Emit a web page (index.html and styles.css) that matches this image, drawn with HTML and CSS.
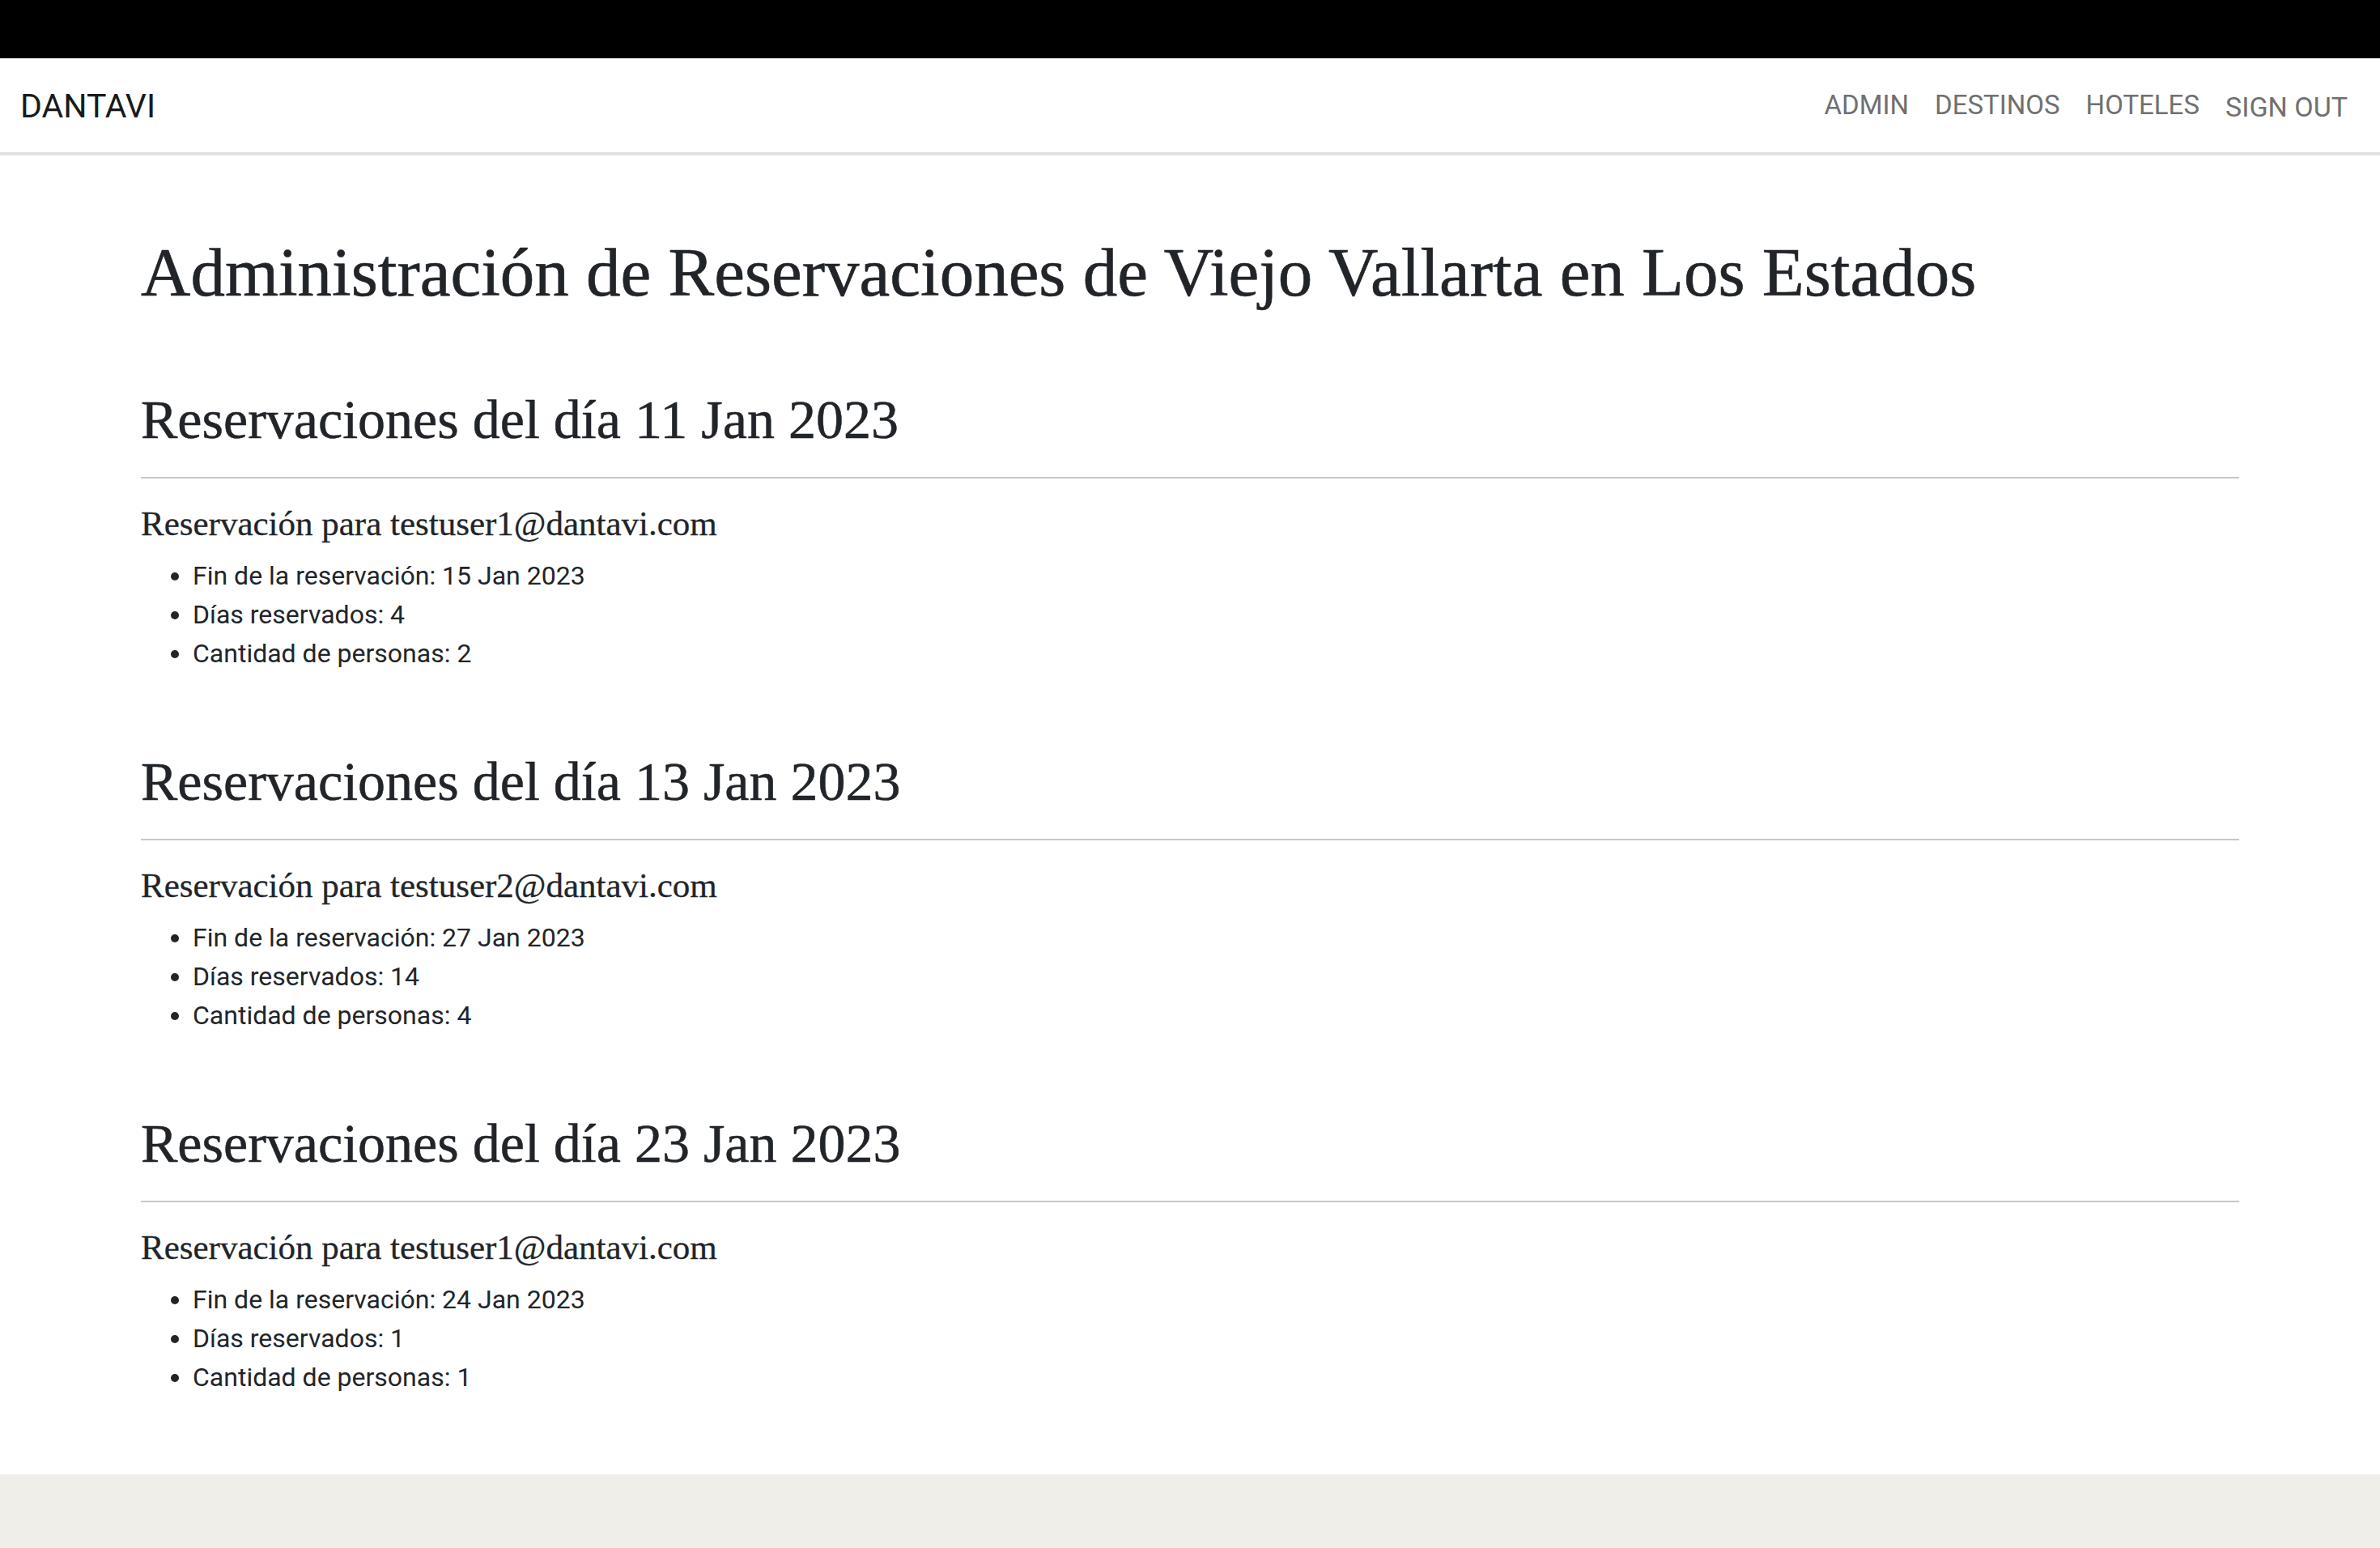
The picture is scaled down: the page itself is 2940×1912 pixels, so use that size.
FILE: index.html
```html
<!DOCTYPE html>
<html lang="es">
<head>
<meta charset="utf-8">
<title>Administración de Reservaciones</title>
<link rel="stylesheet" href="styles.css">
</head>
<body>
<div class="topbar"></div>
<nav class="navbar">
  <div class="nav-inner">
    <a class="brand" href="#">DANTAVI</a>
    <ul class="nav-links">
      <li><a class="nav-link" href="#">ADMIN</a></li>
      <li><a class="nav-link" href="#">DESTINOS</a></li>
      <li><a class="nav-link" href="#">HOTELES</a></li>
      <li><button class="nav-link signout" type="button">SIGN OUT</button></li>
    </ul>
  </div>
</nav>
<main class="container">
  <h1 class="page-title">Administración de Reservaciones de Viejo Vallarta en Los Estados</h1>

  <section class="day">
    <h2 class="day-title">Reservaciones del día 11 Jan 2023</h2>
    <hr class="divider">
    <h5 class="res-title">Reservación para testuser1@dantavi.com</h5>
    <ul class="res-list">
      <li>Fin de la reservación: 15 Jan 2023</li>
      <li>Días reservados: 4</li>
      <li>Cantidad de personas: 2</li>
    </ul>
  </section>

  <section class="day">
    <h2 class="day-title">Reservaciones del día 13 Jan 2023</h2>
    <hr class="divider">
    <h5 class="res-title">Reservación para testuser2@dantavi.com</h5>
    <ul class="res-list">
      <li>Fin de la reservación: 27 Jan 2023</li>
      <li>Días reservados: 14</li>
      <li>Cantidad de personas: 4</li>
    </ul>
  </section>

  <section class="day">
    <h2 class="day-title">Reservaciones del día 23 Jan 2023</h2>
    <hr class="divider">
    <h5 class="res-title">Reservación para testuser1@dantavi.com</h5>
    <ul class="res-list">
      <li>Fin de la reservación: 24 Jan 2023</li>
      <li>Días reservados: 1</li>
      <li>Cantidad de personas: 1</li>
    </ul>
  </section>
</main>
<footer class="footer"></footer>
</body>
</html>
```

FILE: styles.css
```css
* {
  box-sizing: border-box;
}

html, body {
  margin: 0;
  padding: 0;
}

body {
  background: #ffffff;
  color: #212529;
  font-family: Roboto, "Liberation Sans", sans-serif;
  font-size: 32px;
  line-height: 48px;
}

.topbar {
  height: 72px;
  background: #000000;
}

.navbar {
  height: 120px;
  border-bottom: 4px solid #dee2e6;
  background: #ffffff;
}

.nav-inner {
  height: 116px;
  padding: 0 24px 0 25px;
  display: flex;
  align-items: center;
  justify-content: space-between;
}

.brand {
  font-family: Roboto, "Liberation Sans", sans-serif;
  font-size: 41px;
  line-height: 60px;
  color: #1a1a1a;
  text-decoration: none;
  margin-top: 2px;
}

.nav-links {
  list-style: none;
  margin: 0;
  padding: 0;
  display: flex;
  align-items: center;
}

.nav-link {
  display: block;
  padding: 0 16px;
  font-family: Roboto, "Liberation Sans", sans-serif;
  font-size: 33px;
  line-height: 48px;
  color: #707070;
  text-decoration: none;
}

.signout {
  background: none;
  border: 0;
  margin: 0;
  font-size: 34px;
  cursor: pointer;
  padding-top: 3px;
}

.container {
  max-width: 2640px;
  margin: 0 auto;
  padding: 0 24px 96px;
}

.page-title {
  margin: 96px 0 0;
  font-family: "Liberation Serif", "DejaVu Serif", serif;
  font-weight: 400;
  font-size: 85px;
  line-height: 96px;
  -webkit-text-stroke: 0.6px #212529;
}

.day {
  padding-top: 96px;
}

.day-title {
  margin: 0;
  font-family: "Liberation Serif", "DejaVu Serif", serif;
  font-weight: 400;
  font-size: 68px;
  line-height: 77px;
  -webkit-text-stroke: 0.5px #212529;
}

.divider {
  margin: 32px 0;
  border: 0;
  border-top: 2px solid #212529;
  opacity: 0.25;
}

.res-title {
  margin: 0 0 16px;
  font-family: "Liberation Serif", "DejaVu Serif", serif;
  font-weight: 400;
  font-size: 43px;
  line-height: 48px;
  -webkit-text-stroke: 0.3px #212529;
}

.res-list {
  margin: 0;
  padding-left: 64px;
}

.footer {
  height: 240px;
  background: #efeee9;
}
```
